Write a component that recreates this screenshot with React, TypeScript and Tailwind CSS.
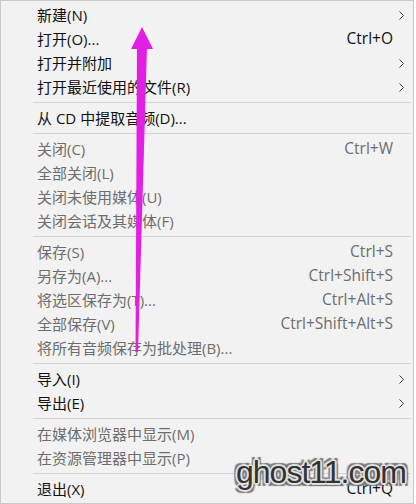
import { Fragment } from 'react';

type Item = {
  label: string;
  shortcut?: string;
  sub?: boolean;
  disabled?: boolean;
};

const groups: Item[][] = [
  [
    { label: '新建(N)', sub: true },
    { label: '打开(O)...', shortcut: 'Ctrl+O' },
    { label: '打开并附加', sub: true },
    { label: '打开最近使用的文件(R)', sub: true }
  ],
  [{ label: '从 CD 中提取音频(D)...' }],
  [
    { label: '关闭(C)', shortcut: 'Ctrl+W', disabled: true },
    { label: '全部关闭(L)', disabled: true },
    { label: '关闭未使用媒体(U)', disabled: true },
    { label: '关闭会话及其媒体(F)', disabled: true }
  ],
  [
    { label: '保存(S)', shortcut: 'Ctrl+S', disabled: true },
    { label: '另存为(A)...', shortcut: 'Ctrl+Shift+S', disabled: true },
    { label: '将选区保存为(T)...', shortcut: 'Ctrl+Alt+S', disabled: true },
    { label: '全部保存(V)', shortcut: 'Ctrl+Shift+Alt+S', disabled: true },
    { label: '将所有音频保存为批处理(B)...', disabled: true }
  ],
  [
    { label: '导入(I)', sub: true },
    { label: '导出(E)', sub: true }
  ],
  [
    { label: '在媒体浏览器中显示(M)', disabled: true },
    { label: '在资源管理器中显示(P)', disabled: true }
  ],
  [{ label: '退出(X)', shortcut: 'Ctrl+Q' }]
];

function Chevron() {
  return (
    <svg width="6" height="9" viewBox="0 0 6 9" className="ml-[6px]">
      <polyline points="0.5,0.5 4.5,4.5 0.5,8.5" fill="none" stroke="#3c3c3c" strokeWidth="1" />
    </svg>
  );
}

function MenuRow({ item }: { item: Item }) {
  const color = item.disabled ? 'text-[#6d6d6d]' : 'text-[#111111]';
  return (
    <div className={`flex h-6 items-center pl-[36px] ${color}`}>
      <span className="flex-1 whitespace-nowrap text-[15px]">{item.label}</span>
      {item.shortcut && <span className="whitespace-nowrap text-[15.5px]">{item.shortcut}</span>}
      <span className="flex w-5 items-center">{item.sub && <Chevron />}</span>
    </div>
  );
}

export default function App() {
  return (
    <div
      className="relative h-[504px] w-[416px] overflow-hidden bg-white"
      style={{ fontFamily: '"Open Sans", "Noto Sans CJK SC", sans-serif' }}
    >
      <div className="h-[504px] w-[414px] border border-[#c9c9c9] bg-[#f2f2f2] pt-[2px]">
        {groups.map((group, gi) => (
          <Fragment key={gi}>
            {gi > 0 && (
              <div className="flex h-[7px] items-center pl-[32px] pr-[2px]">
                <div className="h-px flex-1 bg-[#d4d4d4]" />
              </div>
            )}
            {group.map((item) => (
              <MenuRow key={item.label} item={item} />
            ))}
          </Fragment>
        ))}
      </div>

      {/* magenta annotation arrow */}
      <svg className="pointer-events-none absolute left-0 top-0" width="416" height="504">
        <polygon points="137,47 147,47 138,352 135.5,352" fill="#e21fe2" />
        <polygon points="131,49 153,49 142,27" fill="#e21fe2" />
      </svg>

      {/* watermark */}
      <div
        className="pointer-events-none absolute left-[236px] top-[456px] whitespace-nowrap text-[32px] leading-none tracking-[-1px] text-[#333333]"
        style={{
          fontFamily: '"Liberation Sans", sans-serif',
          textShadow:
            '1px 1px 0 #e4e4e4, -1px -1px 0 #e4e4e4, 1px -1px 0 #e4e4e4, -1px 1px 0 #e4e4e4, 2px 0 0 #d8d8d8, -2px 0 0 #d8d8d8, 0 2px 0 #d8d8d8, 0 -2px 0 #d8d8d8, 3px 3px 1px #7a7a7a, -3px -3px 1px #7a7a7a, 3px -3px 1px #7a7a7a, -3px 3px 1px #7a7a7a'
        }}
      >
        ghost11.com
      </div>
    </div>
  );
}
